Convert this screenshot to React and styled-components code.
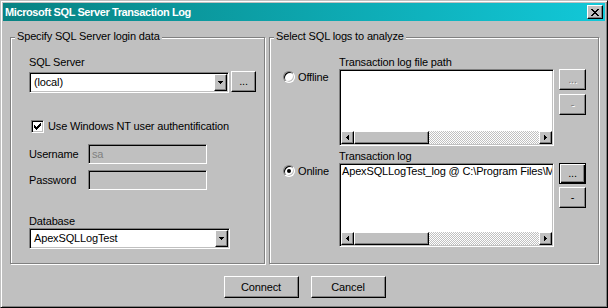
import React from 'react';
import styled, { createGlobalStyle, css } from 'styled-components';

const FACE = '#c0c0c0';
const FONT = '"Liberation Sans", Arial, sans-serif';

const GlobalStyle = createGlobalStyle`
  html, body { margin: 0; padding: 0; background: ${FACE}; }
  body { font-family: ${FONT}; font-size: 11px; }
  *, *::before, *::after { box-sizing: border-box; }
`;

const raised = css`
  border: 1px solid;
  border-color: #fff #000 #000 #fff;
  box-shadow: inset -1px -1px 0 #808080;
  background: ${FACE};
`;

const sunken = css`
  border: 1px solid;
  border-color: #808080 #fff #fff #808080;
  box-shadow: inset 1px 1px 0 #000, inset -1px -1px 0 ${FACE};
  padding: 1px;
`;

const Window = styled.div`
  width: 608px;
  height: 308px;
  background: ${FACE};
  border: 1px solid;
  border-color: ${FACE} #000 #000 ${FACE};
  box-shadow: inset 1px 1px 0 #fff, inset -1px -1px 0 #808080;
  padding: 2px;
  display: flex;
  flex-direction: column;
  font-family: ${FONT};
  font-size: 11px;
  letter-spacing: -0.15px;
  color: #000;
`;

const TitleBar = styled.div`
  height: 18px;
  flex: none;
  display: flex;
  align-items: center;
  justify-content: space-between;
  padding: 0 2px;
  background: linear-gradient(to right, #088282, #12c8d8);
`;

const Title = styled.span`
  color: #fff;
  font-weight: bold;
  font-size: 11px;
  letter-spacing: -0.4px;
  line-height: 13px;
`;

const CloseButton = styled.div`
  ${raised};
  width: 16px;
  height: 14px;
  display: flex;
  align-items: center;
  justify-content: center;
`;

const Glyph = styled.svg`
  display: block;
  shape-rendering: crispEdges;
  fill: ${p => p.$color || '#000'};
`;

const Body = styled.div`
  flex: 1;
  display: flex;
  flex-direction: column;
  padding: 16px 6px 0 7px;
`;

const Groups = styled.div`
  display: flex;
  gap: 4px;
`;

const GroupBox = styled.div`
  position: relative;
  width: ${p => p.$w}px;
  height: 227px;
  border: 1px solid #808080;
  box-shadow: inset 1px 1px 0 #fff, 1px 1px 0 #fff;
  padding-left: ${p => p.$pl}px;
  display: flex;
  flex-direction: column;
`;

const Legend = styled.span`
  position: absolute;
  top: -8px;
  left: 4px;
  padding: 0 2px;
  background: ${FACE};
  line-height: 13px;
  white-space: nowrap;
`;

const FieldLabel = styled.div`
  line-height: 13px;
  margin-top: ${p => p.$mt || 0}px;
`;

const Row = styled.div`
  display: flex;
  align-items: flex-start;
  gap: 2px;
  margin-top: ${p => p.$mt || 0}px;
`;

const Combo = styled.div`
  ${sunken};
  width: ${p => p.$w}px;
  height: 21px;
  margin-top: ${p => p.$mt || 0}px;
  background: #fff;
  display: flex;
`;

const ComboText = styled.div`
  flex: 1;
  padding-left: 3px;
  line-height: 17px;
  white-space: nowrap;
  overflow: hidden;
`;

const DropButton = styled.div`
  ${raised};
  width: 13px;
  height: 17px;
  display: flex;
  align-items: center;
  justify-content: center;
`;

const PushButton = styled.div`
  width: ${p => p.$w}px;
  height: ${p => p.$h}px;
  display: flex;
  align-items: center;
  justify-content: center;
  line-height: 13px;
  color: ${p => (p.$disabled ? '#808080' : '#000')};
  text-shadow: ${p => (p.$disabled ? '1px 1px 0 #fff' : 'none')};
  background: ${FACE};
  border: 1px solid;
  ${p =>
    p.$default
      ? css`
          border-color: #000;
          box-shadow: inset 1px 1px 0 #fff, inset -1px -1px 0 #000, inset -2px -2px 0 #808080;
        `
      : css`
          border-color: #fff #000 #000 #fff;
          box-shadow: inset -1px -1px 0 #808080;
        `}
`;

const CheckRow = styled.div`
  display: flex;
  align-items: center;
  gap: 4px;
  margin: ${p => p.$mt}px 0 0 2px;
  line-height: 13px;
`;

const CheckBox = styled.div`
  ${sunken};
  padding: 0;
  width: 13px;
  height: 13px;
  background: #fff;
  flex: none;
`;

const InputRow = styled.div`
  display: flex;
  align-items: center;
  margin-top: ${p => p.$mt}px;
`;

const InputLabel = styled.div`
  width: 59px;
  line-height: 13px;
`;

const TextBox = styled.div`
  ${sunken};
  width: 119px;
  height: 20px;
  background: ${p => (p.$disabled ? FACE : '#fff')};
  color: ${p => (p.$disabled ? '#808080' : '#000')};
  padding-left: 3px;
  line-height: 16px;
`;

const LogSection = styled.div`
  display: grid;
  grid-template-columns: 51px 215px 27px;
  column-gap: 5px;
  margin-top: ${p => p.$mt}px;
`;

const SectionLabel = styled.div`
  grid-column: 2;
  grid-row: 1;
  line-height: 13px;
`;

const RadioOption = styled.div`
  grid-column: 1;
  grid-row: 2;
  align-self: start;
  display: flex;
  align-items: center;
  gap: 3px;
  margin-top: 2px;
  line-height: 12px;
`;

const RadioCircle = styled.span`
  width: 12px;
  height: 12px;
  flex: none;
  border-radius: 50%;
  background: #fff;
  border: 1px solid;
  border-color: #808080 #fff #fff #808080;
  box-shadow: inset 1px 1px 0 #000, inset -1px -1px 0 ${FACE};
  display: flex;
  align-items: center;
  justify-content: center;
`;

const RadioDot = styled.span`
  width: 4px;
  height: 4px;
  border-radius: 50%;
  background: #000;
`;

const ListBox = styled.div`
  ${sunken};
  grid-column: 2;
  grid-row: 2;
  min-width: 0;
  height: ${p => p.$h}px;
  background: #fff;
  display: flex;
  flex-direction: column;
  overflow: hidden;
`;

const ListItems = styled.div`
  flex: 1;
  min-width: 0;
  overflow: hidden;
  white-space: nowrap;
  line-height: 13px;
  padding-left: 1px;
`;

const HScroll = styled.div`
  height: 13px;
  flex: none;
  display: flex;
`;

const ScrollButton = styled.div`
  ${raised};
  width: 13px;
  height: 13px;
  flex: none;
  display: flex;
  align-items: center;
  justify-content: center;
`;

const Thumb = styled.div`
  ${raised};
  width: 75px;
  height: 13px;
  flex: none;
`;

const Track = styled.div`
  flex: 1;
  background: repeating-conic-gradient(#fff 0 25%, ${FACE} 0 50%) 0 0 / 2px 2px;
`;

const ButtonCol = styled.div`
  grid-column: 3;
  grid-row: 2;
  display: flex;
  flex-direction: column;
  gap: ${p => p.$gap}px;
`;

const ButtonRow = styled.div`
  display: flex;
  justify-content: center;
  gap: 12px;
  margin-top: 12px;
`;

const DownArrow = () => (
  <Glyph width="5" height="3" viewBox="0 0 5 3">
    <path d="M0 0h5v1h-1v1h-1v1h-1v-1h-1v-1h-1z" />
  </Glyph>
);

const LeftArrow = () => (
  <Glyph width="3" height="5" viewBox="0 0 3 5">
    <path d="M2 0h1v5h-1v-1h-1v-1h-1v-1h1v-1h1z" />
  </Glyph>
);

const RightArrow = () => (
  <Glyph width="3" height="5" viewBox="0 0 3 5">
    <path d="M0 0h1v1h1v1h1v1h-1v1h-1v1h-1z" />
  </Glyph>
);

const CheckMark = () => (
  <Glyph width="11" height="11" viewBox="1 1 11 11">
    <path d="M3 5h1v1h1v1h1v-1h1v-1h1v-1h1v-1h1v3h-1v1h-1v1h-1v1h-1v1h-1v-1h-1v-1h-1z" />
  </Glyph>
);

const CloseGlyph = () => (
  <Glyph width="8" height="7" viewBox="0 0 8 7">
    <path d="M0 0h2v1h-2zM6 0h2v1h-2zM1 1h2v1h-2zM5 1h2v1h-2zM2 2h4v1h-4zM3 3h2v1h-2zM2 4h4v1h-4zM1 5h2v1h-2zM5 5h2v1h-2zM0 6h2v1h-2zM6 6h2v1h-2z" />
  </Glyph>
);

const ComboBox = ({ width, value, mt }) => (
  <Combo $w={width} $mt={mt}>
    <ComboText>{value}</ComboText>
    <DropButton>
      <DownArrow />
    </DropButton>
  </Combo>
);

const ScrollBar = () => (
  <HScroll>
    <ScrollButton>
      <LeftArrow />
    </ScrollButton>
    <Thumb />
    <Track />
    <ScrollButton>
      <RightArrow />
    </ScrollButton>
  </HScroll>
);

export default function App() {
  return (
    <>
      <GlobalStyle />
      <Window>
        <TitleBar>
          <Title>Microsoft SQL Server Transaction Log</Title>
          <CloseButton>
            <CloseGlyph />
          </CloseButton>
        </TitleBar>
        <Body>
          <Groups>
            <GroupBox $w={255} $pl={18}>
              <Legend>Specify SQL Server login data</Legend>
              <FieldLabel $mt={18}>SQL Server</FieldLabel>
              <Row $mt={2}>
                <ComboBox width={200} value="(local)" mt={1} />
                <PushButton $w={25} $h={21}>...</PushButton>
              </Row>
              <CheckRow $mt={27}>
                <CheckBox>
                  <CheckMark />
                </CheckBox>
                <span>Use Windows NT user authentification</span>
              </CheckRow>
              <InputRow $mt={11}>
                <InputLabel>Username</InputLabel>
                <TextBox $disabled>sa</TextBox>
              </InputRow>
              <InputRow $mt={6}>
                <InputLabel>Password</InputLabel>
                <TextBox $disabled />
              </InputRow>
              <FieldLabel $mt={25}>Database</FieldLabel>
              <ComboBox width={201} value="ApexSQLLogTest" />
            </GroupBox>
            <GroupBox $w={330} $pl={13}>
              <Legend>Select SQL logs to analyze</Legend>
              <LogSection $mt={18}>
                <SectionLabel>Transaction log file path</SectionLabel>
                <RadioOption>
                  <RadioCircle />
                  <span>Offline</span>
                </RadioOption>
                <ListBox $h={77}>
                  <ListItems />
                  <ScrollBar />
                </ListBox>
                <ButtonCol $gap={4}>
                  <PushButton $w={27} $h={21} $disabled>...</PushButton>
                  <PushButton $w={27} $h={21} $disabled>-</PushButton>
                </ButtonCol>
              </LogSection>
              <LogSection $mt={4}>
                <SectionLabel>Transaction log</SectionLabel>
                <RadioOption>
                  <RadioCircle>
                    <RadioDot />
                  </RadioCircle>
                  <span>Online</span>
                </RadioOption>
                <ListBox $h={84}>
                  <ListItems>ApexSQLLogTest_log @ C:\Program Files\M</ListItems>
                  <ScrollBar />
                </ListBox>
                <ButtonCol $gap={3}>
                  <PushButton $w={27} $h={21} $default>...</PushButton>
                  <PushButton $w={27} $h={21}>-</PushButton>
                </ButtonCol>
              </LogSection>
            </GroupBox>
          </Groups>
          <ButtonRow>
            <PushButton $w={75} $h={22}>Connect</PushButton>
            <PushButton $w={75} $h={22}>Cancel</PushButton>
          </ButtonRow>
        </Body>
      </Window>
    </>
  );
}
